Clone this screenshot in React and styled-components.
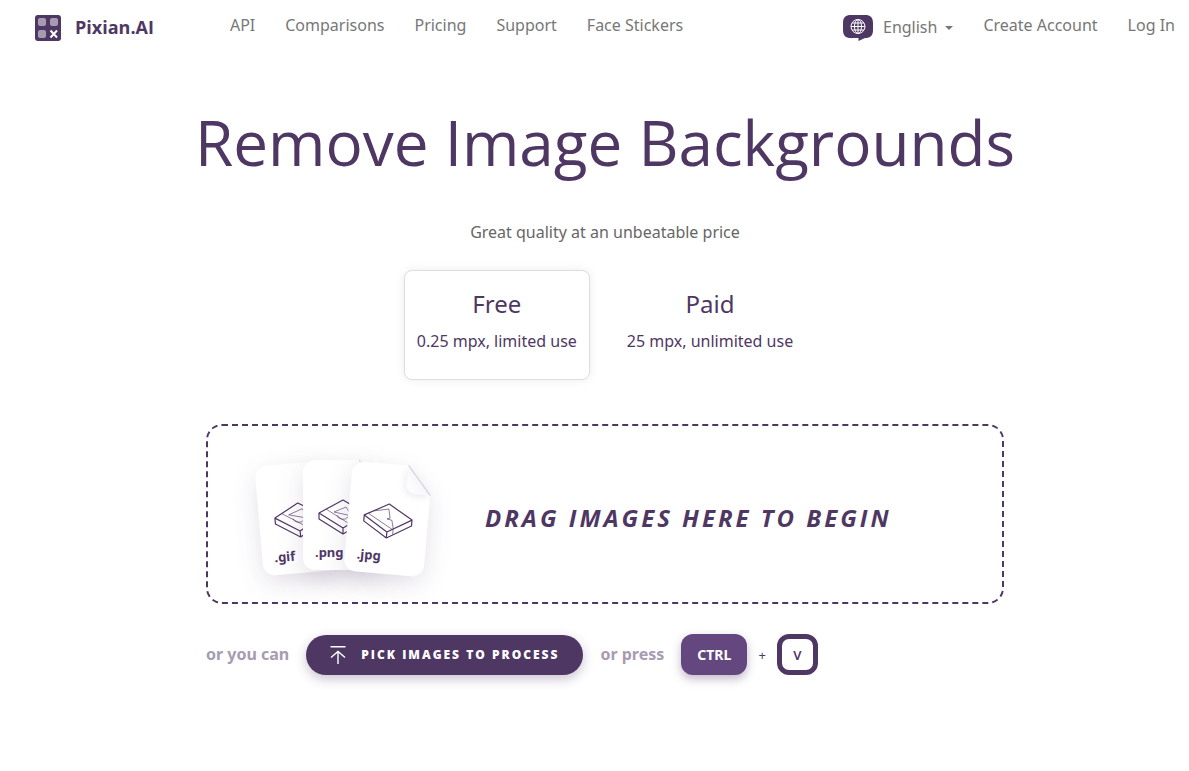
import React, { useRef, useState } from 'react'
import styled, { createGlobalStyle } from 'styled-components'

const purple = '#4f3764'
const lightPurple = '#65477f'
const mutedPurple = '#a79bb1'
const navGray = '#777777'
const headingFont = "'Open Sans', 'Segoe UI', sans-serif"

const GlobalStyle = createGlobalStyle`
  * {
    box-sizing: border-box;
  }
  body {
    margin: 0;
    background-color: white;
    color: ${purple};
    font-family: 'Noto Sans', 'Segoe UI', sans-serif;
    font-size: 16px;
    line-height: 24px;
  }
  button {
    font-family: inherit;
    cursor: pointer;
  }
`
const Header = styled.header`
  display: flex;
  align-items: flex-start;
  padding: 15px 14px 0 35px;
`
const Brand = styled.a`
  display: flex;
  align-items: flex-start;
  gap: 14px;
  margin-right: 76px;
  color: ${purple};
  font-family: ${headingFont};
  font-size: 18px;
  font-weight: 700;
  line-height: 24px;
  text-decoration: none;
`
const Nav = styled.nav`
  display: flex;
  align-items: flex-start;
  gap: 30px;
  margin-left: ${props => props.$right ? 'auto' : '0'};
`
const NavLink = styled.a`
  color: ${navGray};
  line-height: 20px;
  text-decoration: none;
  white-space: nowrap;
`
const Language = styled.button`
  display: flex;
  align-items: flex-start;
  border: none;
  background: none;
  padding: 0;
  color: ${navGray};
  font-size: 16px;
  line-height: 24px;
`
const LanguageName = styled.span`
  margin: 0 8px 0 10px;
`
const Caret = styled.span`
  align-self: center;
  border-top: 4px solid ${navGray};
  border-left: 4px solid transparent;
  border-right: 4px solid transparent;
`
const Main = styled.main`
  display: flex;
  flex-direction: column;
  align-items: center;
  padding: 57px 0 64px 21px;
`
const Title = styled.h1`
  margin: 0;
  font-family: ${headingFont};
  font-size: 62px;
  font-weight: 400;
  line-height: 88px;
  text-align: center;
`
const Subtitle = styled.p`
  margin: 34px 0 26px;
  color: #666666;
`
const Plans = styled.div`
  display: flex;
  gap: 24px;
`
const Plan = styled.button`
  display: flex;
  flex-direction: column;
  align-items: center;
  height: 110px;
  padding: 15px 12px;
  border: 1px solid ${props => props.$active ? '#dddddd' : 'transparent'};
  border-radius: 8px;
  background: white;
  box-shadow: ${props => props.$active ? '0 0 10px rgba(0, 0, 0, 0.08)' : 'none'};
  color: ${purple};
`
const PlanName = styled.span`
  font-size: 24px;
  line-height: 36px;
`
const PlanInfo = styled.span`
  margin-top: 7px;
  font-size: 16px;
  line-height: 24px;
`
const Upload = styled.section`
  width: 100%;
  max-width: 798px;
  margin-top: 44px;
`
const DropZone = styled.div`
  display: flex;
  align-items: center;
  height: 180px;
  padding: 0 22px;
  border: 2px dashed ${purple};
  border-radius: 16px;
`
const DropText = styled.h2`
  margin: 8px 0 0 25px;
  font-family: ${headingFont};
  font-size: 24px;
  font-style: italic;
  font-weight: 700;
  letter-spacing: 3px;
  line-height: 36px;
  text-transform: uppercase;
`
const Actions = styled.div`
  display: flex;
  align-items: center;
  gap: 17px;
  margin-top: 30px;
`
const Hint = styled.span`
  padding-bottom: 2px;
  color: ${mutedPurple};
  font-weight: 700;
`
const PickButton = styled.button`
  display: flex;
  align-items: center;
  gap: 15px;
  height: 40px;
  padding: 0 24px;
  border: none;
  border-radius: 20px;
  background-color: ${purple};
  box-shadow: 0 4px 12px rgba(79, 55, 100, 0.3);
  color: white;
  font-family: ${headingFont};
  font-size: 12px;
  font-weight: 800;
  letter-spacing: 2px;
  text-transform: uppercase;
`
const Shortcut = styled.div`
  display: flex;
  align-items: center;
  gap: 11px;
  font-size: 13px;
`
const Key = styled.kbd`
  display: flex;
  align-items: center;
  justify-content: center;
  height: 41px;
  min-width: 41px;
  padding: 0 ${props => props.$outline ? '0' : '16px'};
  border: ${props => props.$outline ? `5px solid ${purple}` : 'none'};
  border-radius: 12px;
  background-color: ${props => props.$outline ? 'white' : lightPurple};
  box-shadow: ${props => props.$outline ? 'none' : '0 4px 10px rgba(79, 55, 100, 0.35)'};
  color: ${props => props.$outline ? purple : 'white'};
  font-family: inherit;
  font-size: ${props => props.$outline ? '13px' : '14px'};
  font-weight: ${props => props.$outline ? '600' : '700'};
`
const Artwork = styled.svg`
  flex: none;
  overflow: visible;
`

const Logo = () => (
  <svg width="26" height="26" viewBox="0 0 26 26" aria-hidden="true">
    <rect width="26" height="26" rx="3" fill={purple} />
    <rect x="3" y="3" width="8" height="8" rx="2" fill={mutedPurple} />
    <rect x="15" y="3" width="8" height="8" rx="2" fill={mutedPurple} />
    <rect x="3" y="15" width="8" height="8" rx="2" fill={mutedPurple} />
    <path d="M15.5 15.5l6.5 7M22 15.5l-6.5 7" stroke="white" strokeWidth="2" />
  </svg>
)

const GlobeBubble = () => (
  <svg width="30" height="26" viewBox="0 0 30 26" aria-hidden="true">
    <path d="M8 0h14c5.500 0 8 2.500 8 8v7c0 5.500-2.500 8-8 8l-6.500 3v-3H8c-5.500 0-8-2.500-8-8V8c0-5.500 2.500-8 8-8z" fill={purple} />
    <g fill="none" stroke="white" strokeWidth="1">
      <circle cx="15" cy="11.500" r="7" />
      <ellipse cx="15" cy="11.500" rx="3.500" ry="7" />
      <path d="M15 4.500v14M8 11.500h14M9 8h12M9 15h12" />
    </g>
  </svg>
)

const UploadIcon = () => (
  <svg width="16" height="20" viewBox="0 0 16 20" fill="none" stroke="white" strokeWidth="1.400" aria-hidden="true">
    <path d="M0.500 1.700h15M8 19V7M1 12.500L8 6.500l7 6" />
  </svg>
)

const cardShape = 'M-28-55H16L40-27V43a12 12 0 0 1-12 12H-28a12 12 0 0 1-12-12V-43a12 12 0 0 1 12-12z'

const FileCard = ({ x, y, angle, ext, children }) => (
  <g transform={`translate(${x} ${y}) rotate(${angle})`}>
    <path d={cardShape} fill="white" filter="url(#cardShadow)" />
    <path d="M16-55L40-27H25a10 10 0 0 1-10-9z" fill="url(#foldFill)" filter="url(#foldShadow)" />
    <path d="M16-55L40-27" stroke="#d5cfda" strokeWidth="1" />
    <g fill="none" stroke={purple} strokeLinejoin="round">
      <path d="M0-15L24-1L0 13L-24-2zM-24-2v6L0 19L24 5v-6M0 13v6" strokeWidth="1.200" />
      <g strokeWidth="0.900" opacity="0.700">{children}</g>
    </g>
    <text x="-28" y="42" fill={purple} fontSize="13" fontWeight="700">{ext}</text>
  </g>
)

const FilesArtwork = () => (
  <Artwork width="230" height="148" viewBox="0 0 230 148" aria-hidden="true">
    <defs>
      <linearGradient id="foldFill" x1="0" y1="1" x2="0.600" y2="0.400">
        <stop offset="0" stopColor="white" />
        <stop offset="1" stopColor="#f6f4f8" />
      </linearGradient>
      <filter id="cardShadow" x="-60%" y="-50%" width="220%" height="200%" colorInterpolationFilters="sRGB">
        <feDropShadow dx="0" dy="8" stdDeviation="12" floodColor={purple} floodOpacity="0.160" />
      </filter>
      <filter id="foldShadow" x="-60%" y="-60%" width="220%" height="220%" colorInterpolationFilters="sRGB">
        <feDropShadow dx="-1" dy="2" stdDeviation="3" floodColor={purple} floodOpacity="0.120" />
      </filter>
    </defs>
    <FileCard x="69" y="78" angle="-5" ext=".gif">
      <path d="M-17-6L5 8M-10-4L4-9L9 1zM-6 0a6 5 0 0 0 11 2" />
    </FileCard>
    <FileCard x="113" y="75" angle="0" ext=".png">
      <path d="M-17-6L5 8M-9-3L3-8L9 1zM-6 0a6 5 0 0 0 11 2" />
    </FileCard>
    <FileCard x="158" y="79" angle="5" ext=".jpg">
      <path d="M-20-4L5 10M-14-7L0-10L2-1L-1 0L4 1L6 9L6 15" />
    </FileCard>
  </Artwork>
)

const plans = [
  { name: 'Free', info: '0.25 mpx, limited use' },
  { name: 'Paid', info: '25 mpx, unlimited use' }
]
const links = ['API', 'Comparisons', 'Pricing', 'Support', 'Face Stickers']

const App = () => {
  const [plan, setPlan] = useState('Free')
  const fileInput = useRef(null)
  return (
    <>
      <GlobalStyle />
      <Header>
        <Brand href="#"><Logo />Pixian.AI</Brand>
        <Nav>
          {links.map(link => <NavLink key={link} href="#">{link}</NavLink>)}
        </Nav>
        <Nav $right>
          <Language type="button">
            <GlobeBubble />
            <LanguageName>English</LanguageName>
            <Caret />
          </Language>
          <NavLink href="#">Create Account</NavLink>
          <NavLink href="#">Log In</NavLink>
        </Nav>
      </Header>
      <Main>
        <Title>Remove Image Backgrounds</Title>
        <Subtitle>Great quality at an unbeatable price</Subtitle>
        <Plans>
          {plans.map(({ name, info }) => (
            <Plan key={name} type="button" $active={plan === name} aria-pressed={plan === name} onClick={() => setPlan(name)}>
              <PlanName>{name}</PlanName>
              <PlanInfo>{info}</PlanInfo>
            </Plan>
          ))}
        </Plans>
        <Upload>
          <DropZone onDragOver={e => e.preventDefault()} onDrop={e => e.preventDefault()}>
            <FilesArtwork />
            <DropText>Drag images here to begin</DropText>
          </DropZone>
          <Actions>
            <Hint>or you can</Hint>
            <PickButton type="button" onClick={() => fileInput.current.click()}>
              <UploadIcon />
              Pick images to process
            </PickButton>
            <input ref={fileInput} type="file" accept="image/*" aria-label="Pick images" multiple hidden />
            <Hint>or press</Hint>
            <Shortcut>
              <Key>CTRL</Key>
              <span>+</span>
              <Key $outline>V</Key>
            </Shortcut>
          </Actions>
        </Upload>
      </Main>
    </>
  )
}
export default App
